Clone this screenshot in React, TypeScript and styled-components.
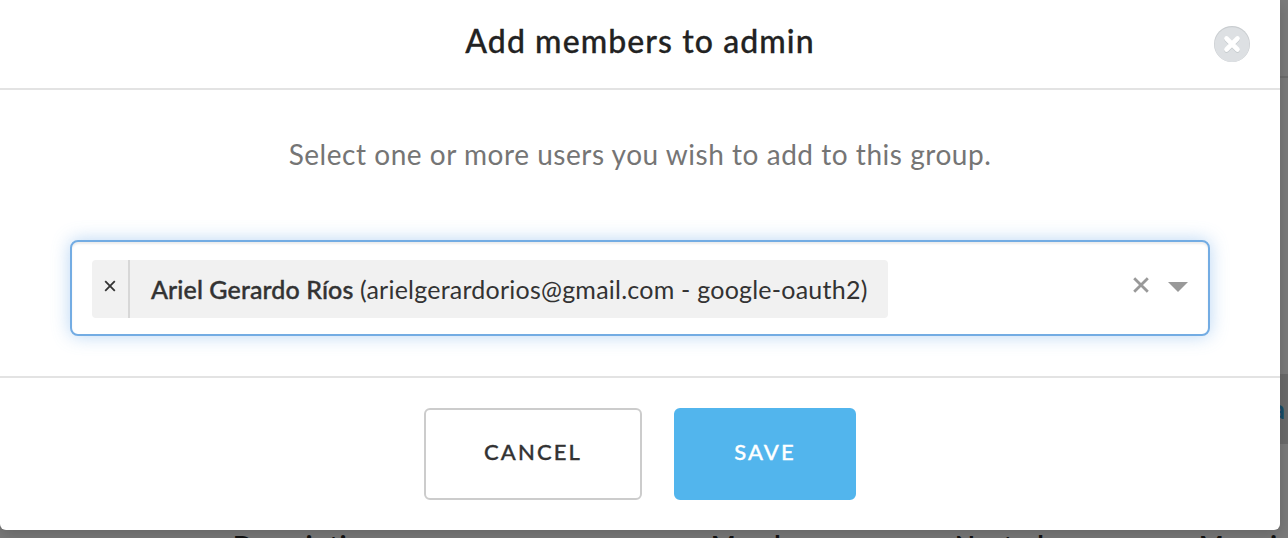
import React from 'react';
import styled, { createGlobalStyle } from 'styled-components';

const GlobalStyle = createGlobalStyle`
  * { box-sizing: border-box; }
  html, body { margin: 0; overflow: hidden; }
  body { font-family: Avenir, Lato, "Open Sans", sans-serif; color: #222; }
  button { font-family: inherit; margin: 0; padding: 0; cursor: pointer; }
`;

const Screen = styled.div`
  position: relative;
  height: 538px;
  overflow: hidden;
  background: #7b7b7b;
`;

const PageBehind = styled.div`
  display: flex;
  flex-direction: column;
  height: 100%;
`;

const TopBar = styled.div`
  flex: none;
  height: 78px;
  border-bottom: 2px solid #6e6e6e;
`;

const Notice = styled.div`
  flex: none;
  display: flex;
  justify-content: flex-end;
  align-items: center;
  height: 70px;
  margin-top: 296px;
  padding-right: 3px;
  background: #6b6b6b;
  color: #174b68;
  font-size: 26px;
  font-weight: 700;
`;

const TableHead = styled.div`
  flex: none;
  display: grid;
  grid-template-columns: 478px 244px 244px 1fr;
  margin-top: 84px;
  padding-left: 233px;
  font-size: 26px;
  line-height: 34px;
  font-weight: 700;
  letter-spacing: 1.1px;
  color: #111;
  white-space: nowrap;
`;

const Dialog = styled.section`
  position: absolute;
  top: 0;
  left: 0;
  width: 1280px;
  height: 530px;
  display: flex;
  flex-direction: column;
  background: #fff;
  border-radius: 0 0 6px 6px;
  box-shadow: 0 5px 15px rgba(0, 0, 0, 0.18);
`;

const Header = styled.header`
  flex: none;
  display: grid;
  grid-template-columns: 66px 1fr 66px;
  align-items: center;
  height: 90px;
  padding-bottom: 3px;
  border-bottom: 2px solid #e3e3e3;
`;

const Title = styled.h1`
  grid-column: 2;
  margin: 0 0 4px;
  text-align: center;
  font-size: 32px;
  line-height: 40px;
  font-weight: 500;
  letter-spacing: 1.08px;
  -webkit-text-stroke: 0.3px currentColor;
`;

const CloseButton = styled.button`
  display: block;
  width: 36px;
  height: 36px;
  margin-top: 3px;
  border: 0;
  border-radius: 50%;
  background: none;
`;

const Body = styled.div`
  flex: none;
  height: 288px;
  padding: 44px 70px 0;
  border-bottom: 2px solid #e3e3e3;
`;

const Prompt = styled.p`
  margin: 0 0 66px;
  text-align: center;
  font-size: 28px;
  line-height: 40px;
  letter-spacing: 0.53px;
  color: #757575;
`;

const Select = styled.div`
  display: flex;
  align-items: center;
  height: 96px;
  padding: 0 20px;
  border: 2px solid #73ace3;
  border-radius: 8px;
  background: #fff;
  box-shadow: inset 0 2px 2px rgba(0, 0, 0, 0.075), 0 0 18px rgba(88, 158, 228, 0.42);
`;

const Chip = styled.div`
  display: flex;
  width: 796px;
  height: 58px;
  margin-top: 2px;
  border-radius: 4px;
  background: #f1f1f1;
  color: #333;
`;

const ChipRemove = styled.button`
  width: 38px;
  border: 0;
  border-right: 2px solid #d7d7d7;
  background: none;
  display: flex;
  justify-content: center;
  padding-top: 20px;
`;

const ChipLabel = styled.span`
  display: flex;
  align-items: center;
  padding: 0 0 1px 21px;
  white-space: pre;
  font-size: 25px;
`;

const UserName = styled.strong`
  font-weight: 500;
  letter-spacing: 0.1px;
  -webkit-text-stroke: 0.4px currentColor;
`;

const UserAccount = styled.span`
  letter-spacing: 0.23px;
`;

const Controls = styled.div`
  display: flex;
  align-items: center;
  gap: 19px;
  margin: 0 0 6px auto;
`;

const Footer = styled.footer`
  display: flex;
  justify-content: center;
  gap: 32px;
  padding-top: 30px;
`;

const Button = styled.button<{ $primary?: boolean }>`
  width: ${(p) => (p.$primary ? 182 : 218)}px;
  height: 92px;
  padding-bottom: 5px;
  border: 2px solid ${(p) => (p.$primary ? '#52b5ed' : '#ccc')};
  border-radius: 6px;
  background: ${(p) => (p.$primary ? '#52b5ed' : '#fff')};
  color: ${(p) => (p.$primary ? '#fff' : '#333')};
  font-size: 22px;
  font-weight: 500;
  letter-spacing: 2.1px;
  -webkit-text-stroke: 0.35px currentColor;
`;

export default function App() {
  return (
    <Screen>
      <GlobalStyle />
      <PageBehind aria-hidden="true">
        <TopBar />
        <Notice>a</Notice>
        <TableHead>
          <span>Description</span>
          <span>Members</span>
          <span>Nested</span>
          <span>Mappings</span>
        </TableHead>
      </PageBehind>
      <Dialog role="dialog">
        <Header>
          <Title>Add members to admin</Title>
          <CloseButton aria-label="Close">
            <svg width="36" height="36" viewBox="0 0 36 36" fill="none">
              <circle cx="18" cy="18" r="18" fill="#c9cdd0" />
              <circle cx="18" cy="18.6" r="17.4" fill="#dde0e3" />
              <path d="M12.5 13.5l11 11m0-11l-11 11" stroke="#c6cbce" strokeWidth="4.6" strokeLinecap="round" />
              <path d="M12.5 12.5l11 11m0-11l-11 11" stroke="#fff" strokeWidth="4.6" strokeLinecap="round" />
            </svg>
          </CloseButton>
        </Header>
        <Body>
          <Prompt>Select one or more users you wish to add to this group.</Prompt>
          <Select>
            <Chip>
              <ChipRemove aria-label="Remove">
                <svg width="12" height="12" viewBox="0 0 12 12" fill="none" stroke="#333" strokeWidth="1.8">
                  <path d="M1.2 1.2l9.6 9.6m0-9.6l-9.6 9.6" />
                </svg>
              </ChipRemove>
              <ChipLabel>
                <UserName>Ariel Gerardo Ríos</UserName>
                <UserAccount> (arielgerardorios@gmail.com - google-oauth2)</UserAccount>
              </ChipLabel>
            </Chip>
            <Controls>
              <svg width="16" height="16" viewBox="0 0 16 16" fill="none" stroke="#999" strokeWidth="2.8">
                <path d="M1.2 1.2l13.6 13.6m0-13.6l-13.6 13.6" />
              </svg>
              <svg width="20" height="14" viewBox="0 0 20 14" fill="#999">
                <path d="M0 4h20l-10 10z" />
              </svg>
            </Controls>
          </Select>
        </Body>
        <Footer>
          <Button>CANCEL</Button>
          <Button $primary>SAVE</Button>
        </Footer>
      </Dialog>
    </Screen>
  );
}
